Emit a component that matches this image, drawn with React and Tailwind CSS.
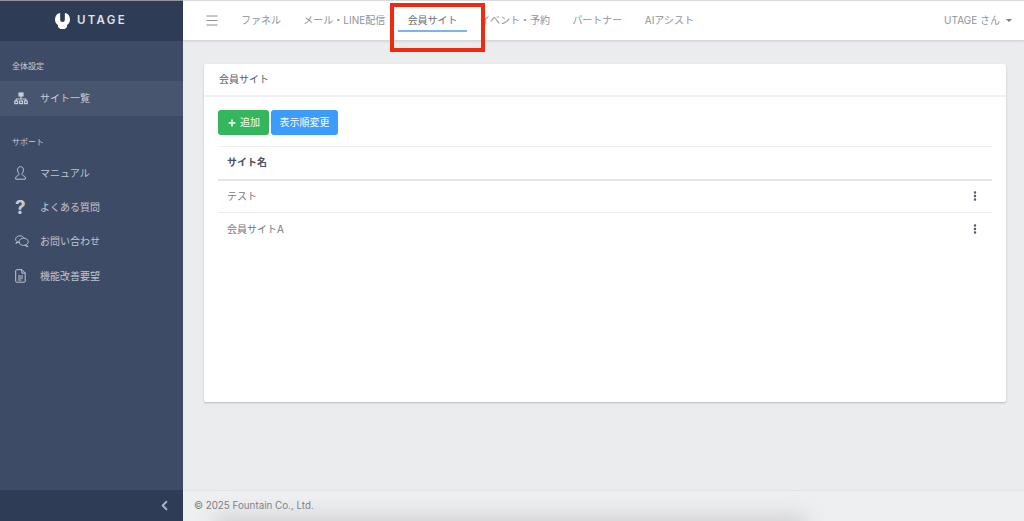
import { ChevronLeft, Plus, EllipsisVertical } from "lucide-react";

const font = "font-['Inter','Noto_Sans_CJK_JP',sans-serif]";

const navItems = ["ファネル", "メール・LINE配信", "会員サイト", "イベント・予約", "パートナー", "AIアシスト"];

const SiteIcon = () => (
  <svg width="14" height="13" viewBox="0 0 14 13" fill="none" stroke="currentColor" strokeWidth="1.2">
    <rect x="5" y="1" width="4" height="3" fill="currentColor" />
    <path d="M7 4V7M2.2 9V7H11.8V9" />
    <rect x="0.8" y="9" width="2.8" height="2.6" />
    <rect x="5.6" y="9" width="2.8" height="2.6" />
    <rect x="10.4" y="9" width="2.8" height="2.6" />
  </svg>
);

const ManualIcon = () => (
  <svg width="11" height="14" viewBox="0 0 11 14" fill="none" stroke="currentColor" strokeWidth="1">
    <path d="M5.5 0.7C3.6 0.7 2.6 2 2.6 3.9C2.6 5.6 3.2 6.8 3.9 7.5C4.2 8.6 3.8 9.2 2.6 9.7C1.3 10.2 0.7 10.8 0.7 11.9V13.2H10.3V11.9C10.3 10.8 9.7 10.2 8.4 9.7C7.2 9.2 6.8 8.6 7.1 7.5C7.8 6.8 8.4 5.6 8.4 3.9C8.4 2 7.4 0.7 5.5 0.7Z" />
  </svg>
);

const ChatIcon = () => (
  <svg width="14" height="13" viewBox="0 0 14 13" fill="none" stroke="currentColor" strokeWidth="0.9">
    <path d="M5 7.4C2.6 7.4 0.6 6.2 0.6 4.2C0.6 2.2 2.6 0.8 5 0.8C6.8 0.8 8.3 1.6 9 2.8" />
    <path d="M2 6.8L0.8 8.4L3.4 7.4" />
    <ellipse cx="8.6" cy="6.8" rx="4.6" ry="3.6" />
    <path d="M11.2 9.6L13 11.8L9.6 10.4" />
  </svg>
);

const DocIcon = () => (
  <svg width="11" height="14" viewBox="0 0 11 14" fill="none" stroke="currentColor" strokeWidth="1">
    <path d="M1.6 0.7H7L10.2 3.9V12.2C10.2 12.8 9.8 13.2 9.2 13.2H1.6C1 13.2 0.7 12.8 0.7 12.2V1.7C0.7 1.1 1 0.7 1.6 0.7Z" />
    <path d="M6.8 0.7V4.1H10.2M3 7H8M3 9H8M3 11H6.4" />
  </svg>
);

const supportItems = [
  { label: "マニュアル", icon: <ManualIcon /> },
  { label: "よくある質問", icon: <span className="text-[19px] font-bold leading-none text-[#c5cad3]">?</span> },
  { label: "お問い合わせ", icon: <ChatIcon /> },
  { label: "機能改善要望", icon: <DocIcon /> }
];

const rows = ["テスト", "会員サイトA"];

function Sidebar() {
  return (
    <aside className="flex w-[183px] shrink-0 flex-col bg-[#3e4b66]">
      <div className="flex h-[41px] items-center justify-center gap-[7px] border-t border-[#8f949d] bg-[#2f3c56] pr-[1px]">
        <svg width="15" height="16" viewBox="0 0 16 17">
          <path
            d="M3.5 0.5 L5.5 0 V7.5 Q5.5 9.5 8 9.5 Q10.5 9.5 10.5 7.5 V0 L12.5 0.5 Q16 2.5 16 7 Q16 11 12.8 12.8 V15 L10.5 17 H5.5 L3.2 15 V12.8 Q0 11 0 7 Q0 2.5 3.5 0.5 Z"
            fill="#ffffff"
          />
        </svg>
        <span className="text-[11.5px] font-semibold leading-none tracking-[0.2em] text-[#dfe3e9]">UTAGE</span>
      </div>
      <p className="mt-[19px] pl-[12px] text-[8px] leading-[12px] text-[#c8cdd6]">全体設定</p>
      <div className="mt-[9px] flex h-[35px] items-center bg-[#48556f] pl-[14px] text-[#c8cdd6]">
        <span className="flex w-[26px]">
          <SiteIcon />
        </span>
        <span className="text-[10px]">サイト一覧</span>
      </div>
      <p className="mt-[20px] pl-[12px] text-[8px] leading-[12px] text-[#c8cdd6]">サポート</p>
      <div className="mt-[8px] flex flex-col">
        {supportItems.map((item) => (
          <div key={item.label} className="flex h-[34.3px] items-center pl-[15px] text-[#c0c6d0]">
            <span className="flex w-[25px] items-center">{item.icon}</span>
            <span className="text-[10px]">{item.label}</span>
          </div>
        ))}
      </div>
      <div className="mt-auto flex h-[31px] items-center justify-end bg-[#2f3c56] pr-[11px] text-[#aab3c2]">
        <ChevronLeft size={15} strokeWidth={3} />
      </div>
    </aside>
  );
}

function Header() {
  return (
    <header className="flex h-[41px] shrink-0 items-center border-y border-t-[#d9dadc] border-b-[#d5d7da] bg-white pl-[23px] pr-[12px] shadow-[0_1px_2px_rgba(0,0,0,0.08)]">
      <svg width="12" height="11" viewBox="0 0 12 11" stroke="#8a8e95" strokeWidth="1">
        <path d="M0.5 1H11.5M0.5 5.5H11.5M0.5 10H11.5" />
      </svg>
      <nav className="ml-[11.8px] flex h-full">
        {navItems.map((item) => (
          <div key={item} className="relative flex h-full items-center px-[11.2px] text-[10px] text-[#8e9299]">
            <span className={item === "会員サイト" ? "text-[#6b6f76]" : ""}>{item}</span>
            {item === "会員サイト" && (
              <span className="absolute bottom-[8px] left-[2px] right-[2px] h-[2px] bg-[#7ab6e8]" />
            )}
          </div>
        ))}
      </nav>
      <div className="ml-auto flex items-center gap-[6px] text-[10px] text-[#8e9299]">
        <span>UTAGE さん</span>
        <span className="h-0 w-0 border-x-[3px] border-t-[3px] border-x-transparent border-t-[#777b82]" />
      </div>
    </header>
  );
}

function SiteCard() {
  return (
    <section className="h-[338px] rounded-[2px] bg-white shadow-[0_1px_2px_rgba(60,70,100,0.3)]">
      <div className="flex h-[33px] items-center border-b-2 border-[#f0f1f2] pl-[15px] text-[10px] text-[#5c6068]">会員サイト</div>
      <div className="px-[14px] pt-[13px]">
        <div className="flex gap-[2px]">
          <button className="flex h-[25px] w-[51px] items-center justify-center gap-[3px] rounded-[3px] bg-[#34b65d] text-[10px] text-white">
            <Plus size={10} strokeWidth={3.5} />
            追加
          </button>
          <button className="flex h-[25px] w-[67px] items-center justify-center rounded-[3px] bg-[#3b9cfb] text-[10px] text-white">
            表示順変更
          </button>
        </div>
        <table className="mt-[11px] w-full text-left text-[10px]">
          <thead>
            <tr className="border-y-2 border-t border-[#eeeff0] border-b-[#e4e5e7]">
              <th className="h-[33px] pl-[9px] font-bold text-[#4d5163]">サイト名</th>
              <th />
            </tr>
          </thead>
          <tbody>
            {rows.map((row) => (
              <tr key={row} className="border-b border-[#eaebec] last:border-b-0">
                <td className="h-[33px] pl-[9px] text-[#77797f]">{row}</td>
                <td className="w-[30px] pr-[11px] text-right">
                  <EllipsisVertical size={12} strokeWidth={3} className="ml-auto text-[#4d5163]" />
                </td>
              </tr>
            ))}
          </tbody>
        </table>
      </div>
    </section>
  );
}

export default function App() {
  return (
    <div className={`relative flex h-[521px] w-[1024px] overflow-hidden bg-[#ebecee] ${font}`}>
      <Sidebar />
      <div className="flex min-w-0 flex-1 flex-col">
        <Header />
        <main className="flex-1 pl-[21px] pr-[18px] pt-[23px]">
          <SiteCard />
        </main>
        <footer className="flex h-[31px] shrink-0 items-center border-t border-[#e3e4e6] bg-[#eeeff0] pl-[11px] text-[9.8px] text-[#74777d]">
          © 2025 Fountain Co., Ltd.
        </footer>
      </div>
      <div className="pointer-events-none absolute bottom-[-14px] left-[215px] h-[18px] w-[590px] bg-[#c9cacd] blur-[10px]" />
      <div className="pointer-events-none absolute left-[390px] top-[3px] h-[49px] w-[95px] border-[4px] border-[#ee2a10]" />
    </div>
  );
}
